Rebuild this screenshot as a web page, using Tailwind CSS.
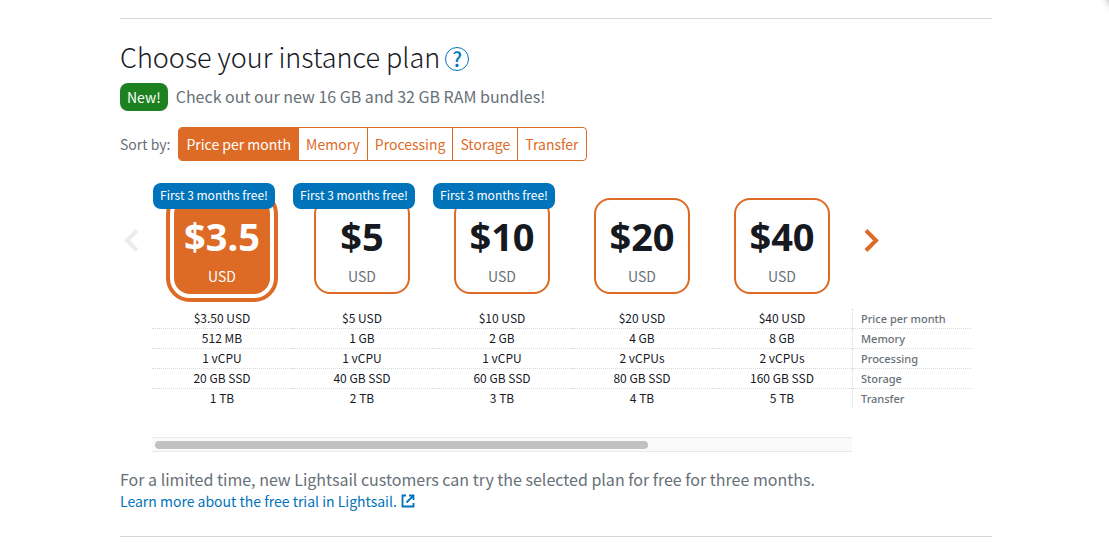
<!DOCTYPE html>
<html lang="en">
<head>
<meta charset="utf-8">
<title>Choose your instance plan</title>
<script src="https://cdn.jsdelivr.net/npm/@tailwindcss/browser@4"></script>
</head>
<body class="relative overflow-x-hidden bg-white font-['Noto_Sans_CJK_SC','Noto_Sans',sans-serif] text-[#687078]">
<div class="absolute -top-6 -right-8 size-8 rounded-full bg-white shadow-[0_0_8px_2px_rgba(0,0,0,0.4)]"></div>
<main class="mt-[18px] mr-[117px] ml-[120px] border-y border-[#d5dbdb] pt-5 pb-6">
  <div class="flex h-10 items-center gap-[5px]">
    <h1 class="pb-1 text-[27px] leading-9 font-light whitespace-nowrap text-[#16191f]">Choose your instance plan</h1>
    <button type="button" aria-label="Help" class="flex size-6 items-center justify-center rounded-full border border-[#0073bb] text-xl leading-5 font-medium text-[#0073bb]">?</button>
  </div>
  <p class="mt-1 flex h-7 items-center gap-2 text-base">
    <span class="flex h-7 items-center rounded-lg bg-[#1d8120] px-[7px] text-sm text-white">New!</span>
    <span class="pb-0.5">Check out our new 16 GB and 32 GB RAM bundles!</span>
  </p>
  <div class="mt-4 flex items-center gap-2 text-sm">
    <span id="sort">Sort by:</span>
    <div role="group" aria-labelledby="sort" class="flex h-[34px] divide-x divide-[#dd6b26] overflow-hidden rounded border border-[#dd6b26] text-[#dd6b26]">
      <button type="button" aria-pressed="true" class="bg-[#dd6b26] px-[7px] pb-px text-white">Price per month</button>
      <button type="button" class="px-[7px] pb-px">Memory</button>
      <button type="button" class="px-[7px] pb-px">Processing</button>
      <button type="button" class="px-[7px] pb-px">Storage</button>
      <button type="button" class="px-[7px] pb-px">Transfer</button>
    </div>
  </div>

  <div class="mt-[22px] mr-5 flex items-start">
    <button type="button" disabled aria-label="Previous plans" class="mt-[45px] w-8 pl-1 text-[#eaeded]">
      <svg class="h-6 w-4" viewBox="0 0 16 24" fill="none" stroke="currentColor" stroke-width="4"><path d="M13 2.500 3 12.500l10 10"/></svg>
    </button>
    <table class="flex-1 table-fixed border-separate border-spacing-0 text-center text-xs leading-[18px] text-[#16191f]">
      <colgroup><col><col><col><col><col><col class="w-[120px]"></colgroup>
      <thead>
        <tr class="align-top">
          <th scope="col" class="h-[126px] p-0 font-normal">
            <label class="relative flex justify-center pt-[15px]">
              <input type="radio" name="plan" checked class="sr-only">
              <span class="flex size-24 flex-col items-center rounded-2xl bg-[#dd6b26] pt-4 text-white ring-4 ring-white outline-4 outline-offset-4 outline-[#dd6b26]"><b class="font-['Noto_Sans',sans-serif] text-[38px] leading-[44px]">$3.5</b><span class="mt-[9px] text-sm leading-[18px]">USD</span></span>
              <span class="absolute top-0 left-px flex h-[26px] w-[122px] items-center justify-center rounded-lg bg-[#0073bb] pb-0.5 whitespace-nowrap text-white">First 3 months free!</span>
            </label>
          </th>
          <th scope="col" class="p-0 font-normal">
            <label class="relative flex justify-center pt-[15px]">
              <input type="radio" name="plan" class="sr-only">
              <span class="flex size-24 flex-col items-center rounded-2xl border-2 border-[#dd6b26] pt-3.5"><b class="font-['Noto_Sans',sans-serif] text-[38px] leading-[44px]">$5</b><span class="mt-[9px] text-sm leading-[18px] text-[#687078]">USD</span></span>
              <span class="absolute top-0 left-px flex h-[26px] w-[122px] items-center justify-center rounded-lg bg-[#0073bb] pb-0.5 whitespace-nowrap text-white">First 3 months free!</span>
            </label>
          </th>
          <th scope="col" class="p-0 font-normal">
            <label class="relative flex justify-center pt-[15px]">
              <input type="radio" name="plan" class="sr-only">
              <span class="flex size-24 flex-col items-center rounded-2xl border-2 border-[#dd6b26] pt-3.5"><b class="font-['Noto_Sans',sans-serif] text-[38px] leading-[44px]">$10</b><span class="mt-[9px] text-sm leading-[18px] text-[#687078]">USD</span></span>
              <span class="absolute top-0 left-px flex h-[26px] w-[122px] items-center justify-center rounded-lg bg-[#0073bb] pb-0.5 whitespace-nowrap text-white">First 3 months free!</span>
            </label>
          </th>
          <th scope="col" class="p-0 font-normal">
            <label class="relative flex justify-center pt-[15px]">
              <input type="radio" name="plan" class="sr-only">
              <span class="flex size-24 flex-col items-center rounded-2xl border-2 border-[#dd6b26] pt-3.5"><b class="font-['Noto_Sans',sans-serif] text-[38px] leading-[44px]">$20</b><span class="mt-[9px] text-sm leading-[18px] text-[#687078]">USD</span></span>
            </label>
          </th>
          <th scope="col" class="p-0 font-normal">
            <label class="relative flex justify-center pt-[15px]">
              <input type="radio" name="plan" class="sr-only">
              <span class="flex size-24 flex-col items-center rounded-2xl border-2 border-[#dd6b26] pt-3.5"><b class="font-['Noto_Sans',sans-serif] text-[38px] leading-[44px]">$40</b><span class="mt-[9px] text-sm leading-[18px] text-[#687078]">USD</span></span>
            </label>
          </th>
          <td class="p-0 text-left">
            <button type="button" aria-label="Next plans" class="mt-[45px] pl-3 text-[#dd6b26]">
              <svg class="h-6 w-4" viewBox="0 0 16 24" fill="none" stroke="currentColor" stroke-width="4"><path d="m2 2.500 10 10-10 10"/></svg>
            </button>
          </td>
        </tr>
      </thead>
      <tbody class="[&_td]:border-dotted [&_td]:border-[#d5dbdb] [&_td]:p-0 [&_td]:pb-px [&_th]:border-l [&_th]:border-dotted [&_th]:border-[#d5dbdb] [&_th]:py-0 [&_th]:pr-0 [&_th]:pl-2 [&_th]:text-left [&_th]:font-['Noto_Sans',sans-serif] [&_th]:text-[11px] [&_th]:font-medium [&_th]:text-[#687078] [&_tr:not(:last-child)>*]:border-b">
        <tr><td>$3.50 USD</td><td>$5 USD</td><td>$10 USD</td><td>$20 USD</td><td>$40 USD</td><th scope="row">Price per month</th></tr>
        <tr><td>512 MB</td><td>1 GB</td><td>2 GB</td><td>4 GB</td><td>8 GB</td><th scope="row">Memory</th></tr>
        <tr><td>1 vCPU</td><td>1 vCPU</td><td>1 vCPU</td><td>2 vCPUs</td><td>2 vCPUs</td><th scope="row">Processing</th></tr>
        <tr><td>20 GB SSD</td><td>40 GB SSD</td><td>60 GB SSD</td><td>80 GB SSD</td><td>160 GB SSD</td><th scope="row">Storage</th></tr>
        <tr><td>1 TB</td><td>2 TB</td><td>3 TB</td><td>4 TB</td><td>5 TB</td><th scope="row">Transfer</th></tr>
      </tbody>
    </table>
  </div>

  <div class="mt-[29px] mr-[140px] ml-8 h-[15px] border-y border-[#e8e8e8] bg-[#fafafa] px-[3px] py-[3px]">
    <div class="h-2 w-[71%] rounded-full bg-[#c1c1c1]"></div>
  </div>

  <p class="mt-[15px] text-base leading-6">For a limited time, new Lightsail customers can try the selected plan for free for three months.</p>
  <p class="mb-px text-sm leading-5">
    <a href="#" class="inline-flex items-center gap-1 text-[#0073bb]">Learn more about the free trial in Lightsail.
      <svg class="size-3.5" viewBox="0 0 14 14" fill="none" stroke="currentColor" stroke-width="1.800"><path d="M5 1.500H1.500v11h11V9M8 1.500h4.500V6M12.500 1.500 5.500 8.500"/></svg>
    </a>
  </p>
</main>
</body>
</html>
